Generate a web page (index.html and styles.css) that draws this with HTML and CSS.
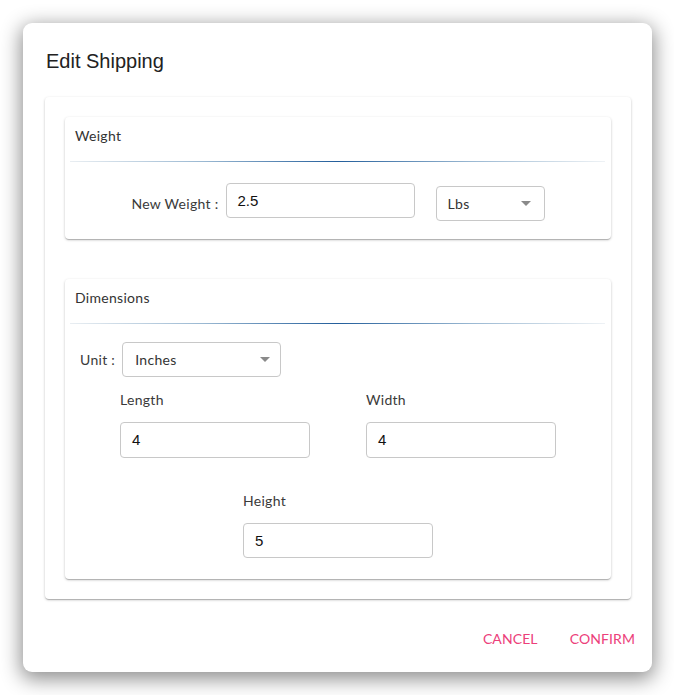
FILE: index.html
```html
<!DOCTYPE html>
<html>
<head>
<meta charset="utf-8">
<link rel="stylesheet" href="styles.css">
</head>
<body>
<div class="dialog">
  <h2 class="title">Edit Shipping</h2>
  <div class="paper outer">
    <div class="paper card">
      <div class="card-head">Weight</div>
      <div class="divider"></div>
      <div class="weight-row">
        <span class="label inline">New Weight :</span>
        <div class="field w-weight">2.5</div>
        <div class="select w-lbs"><span>Lbs</span><span class="caret"></span></div>
      </div>
    </div>
    <div class="paper card dims">
      <div class="card-head">Dimensions</div>
      <div class="divider"></div>
      <div class="dims-body">
        <div class="unit-row">
          <span class="label">Unit :</span>
          <div class="select w-unit"><span>Inches</span><span class="caret"></span></div>
        </div>
        <div class="pair">
          <div class="col">
            <div class="label">Length</div>
            <div class="field w-dim tall">4</div>
          </div>
          <div class="col">
            <div class="label">Width</div>
            <div class="field w-dim tall">4</div>
          </div>
        </div>
        <div class="pair single">
          <div class="col">
            <div class="label">Height</div>
            <div class="field w-dim">5</div>
          </div>
        </div>
      </div>
    </div>
  </div>
  <div class="actions">
    <button class="btn">CANCEL</button>
    <button class="btn">CONFIRM</button>
  </div>
</div>
</body>
</html>
```
FILE: styles.css
```css
html, body {
  margin: 0;
  padding: 0;
  background: #ffffff;
}
body {
  padding: 23px 22px 23px 23px;
  min-height: 695px;
  box-sizing: border-box;
  font-family: Lato, "Noto Sans", sans-serif;
}
.dialog {
  width: 629px;
  height: 649px;
  box-sizing: border-box;
  background: #fff;
  border-radius: 9px;
  box-shadow: 0 5px 20px 2px rgba(0, 0, 0, 0.45);
  padding: 26px 21px 0 22px;
  display: flex;
  flex-direction: column;
}
.title {
  margin: 0 0 0 1px;
  font-family: "Liberation Sans", Arial, sans-serif;
  font-weight: 400;
  font-size: 20px;
  line-height: 24px;
  color: #222;
}
.paper {
  background: #fff;
  border-radius: 4px;
  box-shadow: 0 1px 3px rgba(0,0,0,0.2), 0 1px 1px rgba(0,0,0,0.12), 0 2px 1px -1px rgba(0,0,0,0.1);
}
.outer {
  margin-top: 24px;
  width: 586px;
  box-sizing: border-box;
  padding: 20px;
  display: flex;
  flex-direction: column;
  gap: 40px;
}
.card {
  width: 546px;
}
.card-head {
  padding: 9px 10px 15px;
  font-size: 14px;
  line-height: 20px;
  letter-spacing: 0.3px;
  color: #333;
}
.divider {
  height: 1px;
  margin: 0 6px 0 5px;
  background: linear-gradient(to right, #e9eef2 0%, #9ab8d2 25%, #235e9b 50%, #9ab8d2 75%, #eef2f5 100%);
}
.label {
  font-size: 14px;
  line-height: 20px;
  letter-spacing: 0.3px;
  color: #3a3a3a;
}
.weight-row {
  display: flex;
  justify-content: center;
  align-items: flex-start;
  padding: 21px 0 18px 0;
}
.weight-row .inline {
  margin-top: 11px;
  margin-right: 7px;
}
.field {
  box-sizing: border-box;
  height: 35px;
  border: 1px solid #c8c8c8;
  border-radius: 4px;
  padding: 0 11px;
  font-family: "Liberation Sans", Arial, sans-serif;
  font-size: 15px;
  line-height: 33px;
  color: #111;
}
.field.tall {
  height: 36px;
  line-height: 34px;
}
.w-weight { width: 189px; }
.w-dim { width: 190px; }
.select {
  box-sizing: border-box;
  height: 35px;
  border: 1px solid #c8c8c8;
  border-radius: 4px;
  padding: 0 13px 0 11px;
  display: flex;
  align-items: center;
  justify-content: space-between;
  font-size: 14px;
  letter-spacing: 0.3px;
  color: #333;
}
.w-lbs {
  width: 109px;
  margin-top: 3px;
  margin-left: 21px;
}
.w-unit {
  width: 159px;
  padding-left: 12px;
  padding-right: 10px;
}
.caret {
  width: 0;
  height: 0;
  border-left: 5px solid transparent;
  border-right: 5px solid transparent;
  border-top: 5px solid #8a8a8a;
}
.dims-body {
  padding: 18px 0 21px 0;
}
.unit-row {
  display: flex;
  align-items: center;
  gap: 7px;
  padding-left: 15px;
}
.pair {
  display: flex;
  justify-content: center;
  gap: 56px;
  margin-top: 13px;
}
.pair.single {
  margin-top: 33px;
}
.col {
  display: flex;
  flex-direction: column;
  gap: 12px;
}
.actions {
  display: flex;
  justify-content: flex-end;
  gap: 16px;
  margin-top: 21px;
  margin-right: -12px;
}
.btn {
  background: none;
  border: none;
  height: 36px;
  padding: 0 8px;
  font-family: Lato, sans-serif;
  font-size: 14px;
  font-weight: 400;
  color: #ec407a;
  letter-spacing: 0.1px;
  cursor: pointer;
}
```
